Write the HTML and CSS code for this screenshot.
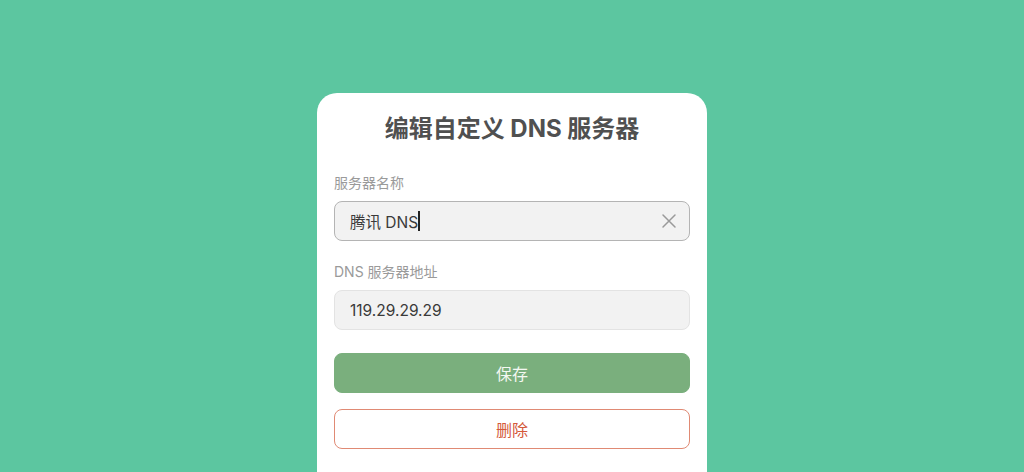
FILE: index.html
```html
<!DOCTYPE html>
<html lang="zh-CN">
<head>
<meta charset="utf-8">
<title>编辑自定义 DNS 服务器</title>
<link rel="stylesheet" href="styles.css">
</head>
<body>
<div class="page">
  <div class="card">
    <h1 class="title">编辑自定义 DNS 服务器</h1>
    <div class="field">
      <div class="label">服务器名称</div>
      <div class="input focused">
        <span class="value">腾讯 DNS<span class="caret"></span></span>
        <svg class="clear" width="16" height="16" viewBox="0 0 16 16"><path d="M2 2L14 14M14 2L2 14" stroke="#9a9a9a" stroke-width="1.5" stroke-linecap="round" fill="none"/></svg>
      </div>
    </div>
    <div class="field">
      <div class="label">DNS 服务器地址</div>
      <div class="input">
        <span class="value">119.29.29.29</span>
      </div>
    </div>
    <button class="btn save">保存</button>
    <button class="btn delete">删除</button>
  </div>
</div>
</body>
</html>
```

FILE: styles.css
```css
* { box-sizing: border-box; }
html, body { margin: 0; height: 100%; overflow: hidden; }
body {
  background: #5cc6a0;
  font-family: Inter, "Noto Sans CJK SC", sans-serif;
}
.page {
  display: flex;
  justify-content: center;
  padding-top: 93px;
}
.card {
  width: 390px;
  background: #fff;
  border-radius: 20px 20px 0 0;
  padding: 16px 17px 40px;
  display: flex;
  flex-direction: column;
}
.title {
  margin: 0 0 24px;
  text-align: center;
  font-size: 24px;
  font-weight: 700;
  color: #505050;
  line-height: 40px;
}
.field { display: flex; flex-direction: column; }
.label {
  font-size: 14px;
  color: #9a9a9a;
  line-height: 20px;
  margin-bottom: 8px;
}
.input {
  height: 40px;
  border-radius: 8px;
  background: #f2f2f2;
  border: 1px solid #e3e3e3;
  display: flex;
  align-items: center;
  justify-content: space-between;
  padding: 0 12px 0 15px;
  margin-bottom: 21px;
}
.input.focused { border-color: #b4b4b4; }
.value {
  font-size: 15.5px;
  color: #3a3a3a;
  display: flex;
  align-items: center;
}
.caret {
  display: inline-block;
  width: 2px;
  height: 20px;
  background: #222;
}
.clear { display: block; }
.btn {
  height: 40px;
  border-radius: 8px;
  font-family: inherit;
  font-size: 16px;
  cursor: pointer;
}
.save {
  background: #7aaf7d;
  border: 1px solid #7aaf7d;
  color: #f4f8f2;
  margin-top: 2px;
  margin-bottom: 16px;
}
.delete {
  background: #fff;
  border: 1.5px solid #e08a74;
  color: #d4593a;
}
```
